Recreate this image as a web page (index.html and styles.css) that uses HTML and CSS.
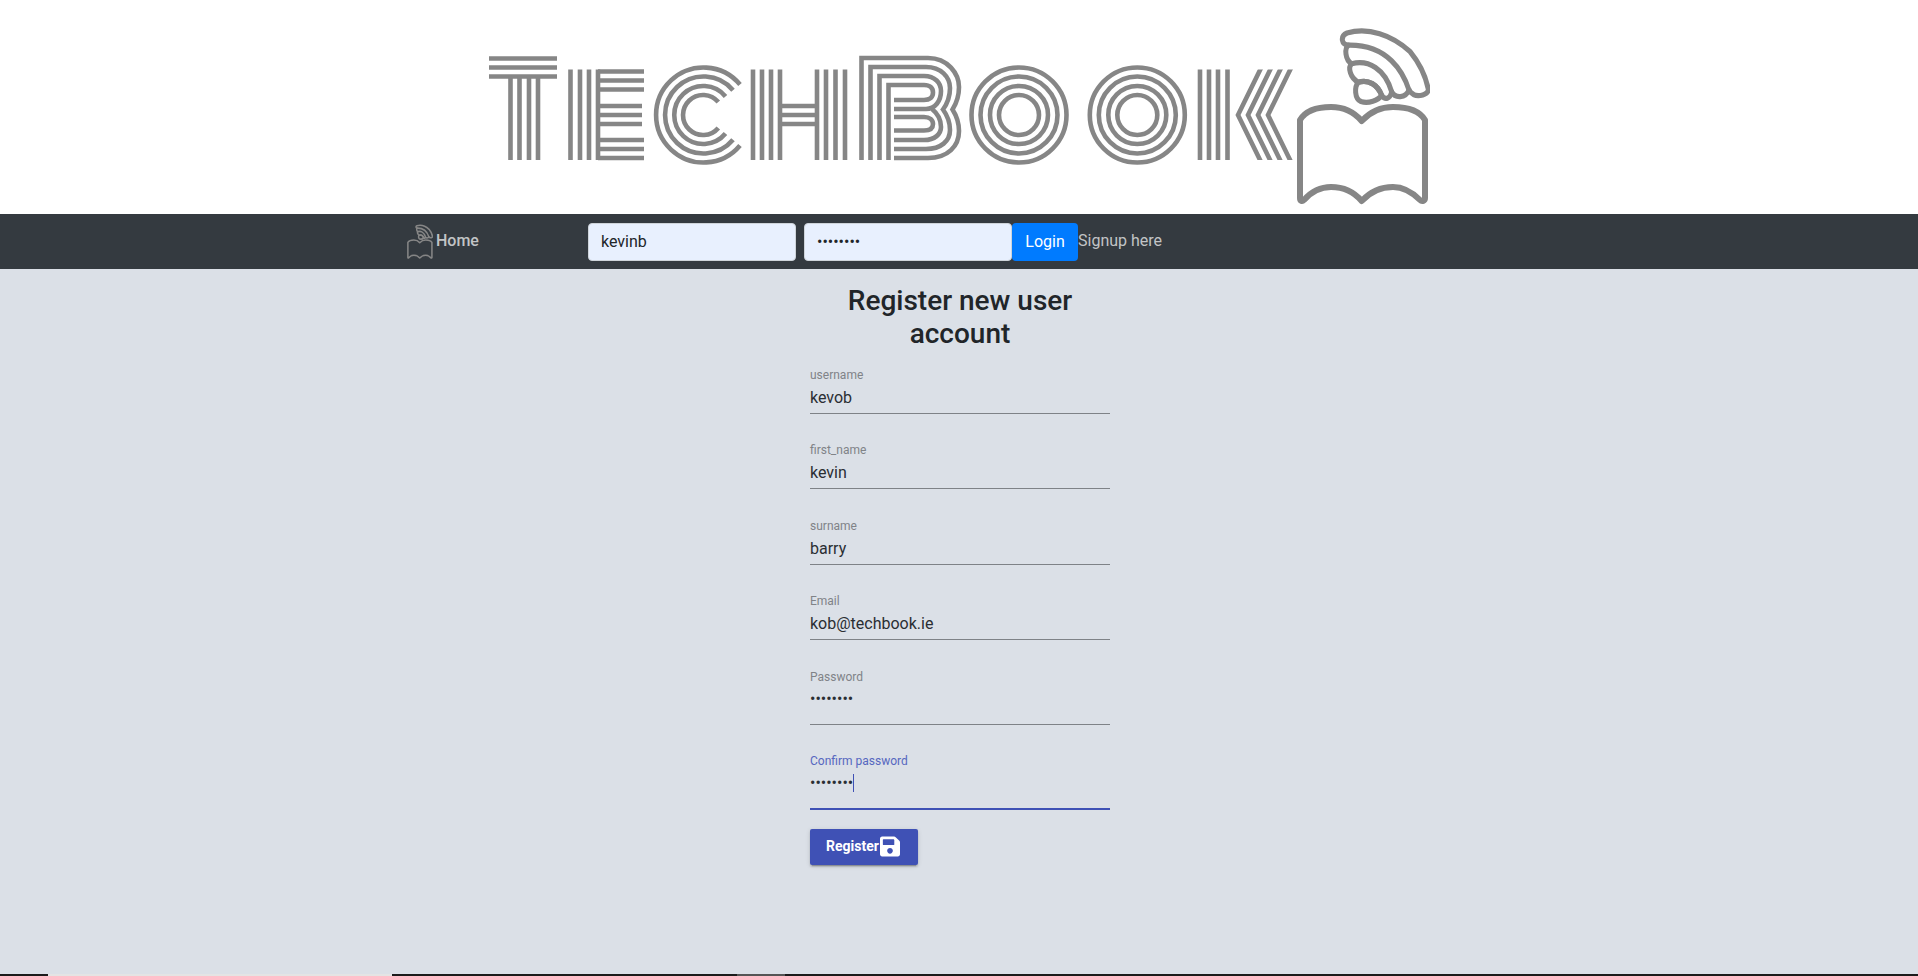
FILE: index.html
```html
<!DOCTYPE html>
<html lang="en">
<head>
<meta charset="utf-8">
<title>TechBook</title>
<link rel="stylesheet" href="styles.css">
</head>
<body>
<svg class="defs" width="0" height="0" aria-hidden="true">
  <symbol id="book-wifi" viewBox="1296 24 134 182">
    <g class="icon-line">
      <path d="M1300 120C1306 110 1318 107 1331 107C1344 107 1354 112 1361.700 121C1370 112 1380 107 1393 107C1406 107 1419 110 1425 120V198C1425 201 1422 202 1420 200C1412 192 1404 187 1393 187C1380 187 1370 192 1361.700 201C1354 192 1344 187 1331 187C1319 187 1311 192 1304 200C1302 202 1300 201 1300 198Z"/>
      <g class="icon-waves" transform="translate(1335 20) scale(.3333 .35)">
        <path d="M40 72C20 72 14 46 36 37C100 20 170 42 225 90C255 125 272 160 280 198C280 214 250 220 236 213C228 208 224 204 222 200C205 150 160 70 40 72Z"/>
        <path d="M40 72C28 80 30 115 50 125C100 112 150 140 170 205C180 224 212 224 222 200"/>
        <path d="M50 125C38 135 45 165 70 178C100 168 128 186 140 215C150 230 165 226 170 205"/>
        <path d="M70 178C58 190 58 225 78 233C100 240 130 230 140 215C128 186 100 168 70 178Z"/>
      </g>
    </g>
  </symbol>
</svg>

<header class="banner">
  <svg class="logo" viewBox="479 0 960 214" width="960" height="214" role="img" aria-label="TechBook">
    <defs>
      <clipPath id="k-clip"><rect x="1230" y="69.500" width="70" height="90.500"/></clipPath>
    </defs>
    <g class="logo-line">
      <path d="M489 58.500H557M489 67.500H557M489 76.500H557"/>
      <path d="M510.500 76V160M519.500 76V160M529 76V160M538 76V160"/>

      <path d="M570.500 69.500V160M580 69.500V160M589 69.500V160M598 69.500V160"/>
      <path d="M598 71.500H644M598 80.500H644M598 89.500H644M598 106H642M598 115H642M598 124H642M598 140H644M598 149H644M598 158H644"/>

      <path d="M740 84.500A47.500 47.500 0 1 0 740 145.500"/>
      <path d="M733 90.200A38.500 38.500 0 1 0 733 139.800"/>
      <path d="M725.500 96.400A29 29 0 1 0 725.500 133.600"/>
      <path d="M718.300 102.100A20 20 0 1 0 718.300 127.900"/>

      <path d="M753 69.500V160M762 69.500V160M771 69.500V160M780 69.500V160M817 69.500V160M826 69.500V160M835.500 69.500V160M845 69.500V160"/>
      <path d="M780 106H817M780 115H817M780 124H817"/>

      <path d="M861.500 160V58H928C948 58 959 74 959 87C959 97 956 104 952.500 109.500C956 115 959 122 959 131C959 146 948 158 928 158H894"/>
      <path d="M870.500 160V67H926C941 67 950 77 950 88C950 96 947 104 943 109.500C947 115 950 122 950 130C950 141 941 149 926 149H894"/>
      <path d="M879.500 160V76H924C935 76 941 83 941 91C941 101 935 109 926 109H894"/>
      <path d="M894 140H924C935 140 941 134 941 127C941 119 937 113 932 109"/>
      <path d="M888.500 160V85H924C930 85 933 88 933 92.500C933 97 930 100 924 100H894"/>
      <path d="M894 117H924C930 117 933 120 933 124C933 128 930 130.500 924 130.500H894"/>

      <circle cx="1019" cy="115" r="47.500"/><circle cx="1019" cy="115" r="38.500"/><circle cx="1019" cy="115" r="29"/><circle cx="1019" cy="115" r="20"/>
      <circle cx="1137.300" cy="115" r="47.500"/><circle cx="1137.300" cy="115" r="38.500"/><circle cx="1137.300" cy="115" r="29"/><circle cx="1137.300" cy="115" r="20"/>

      <path d="M1200 69.500V160M1209 69.500V160M1218 69.500V160M1227.500 69.500V160"/>
      <g clip-path="url(#k-clip)">
        <path d="M1262.500 65L1238 115L1262.500 165M1272.500 65L1248 115L1272.500 165M1282.500 65L1258 115L1282.500 165M1292.500 65L1268 115L1292.500 165"/>
      </g>
    </g>
    <use class="logo-mark" href="#book-wifi" x="1296" y="24" width="134" height="182"/>
  </svg>
</header>

<nav class="navbar">
  <a class="brand" href="#">
    <svg class="brand-icon" width="26" height="35"><use href="#book-wifi"/></svg>
    <span>Home</span>
  </a>
  <form class="login">
    <input class="login-input" type="text" value="kevinb" aria-label="username">
    <input class="login-input" type="password" value="kevinbar" aria-label="password">
    <button class="login-btn" type="button">Login</button>
  </form>
  <a class="signup" href="#">Signup here</a>
</nav>

<main class="content">
  <form class="register">
    <h2 class="register-title">Register new user account</h2>
    <label class="field"><span class="field-label">username</span><input class="field-input" type="text" value="kevob"></label>
    <label class="field"><span class="field-label">first_name</span><input class="field-input" type="text" value="kevin"></label>
    <label class="field"><span class="field-label">surname</span><input class="field-input" type="text" value="barry"></label>
    <label class="field"><span class="field-label">Email</span><input class="field-input" type="text" value="kob@techbook.ie"></label>
    <label class="field field-tall"><span class="field-label">Password</span><input class="field-input" type="password" value="kevinbar"></label>
    <label class="field field-tall field-focused"><span class="field-label">Confirm password</span><input class="field-input" type="password" value="kevinbar"><span class="caret"></span></label>
    <button class="register-btn" type="button">
      <span class="register-text">Register</span>
      <svg class="save-icon" viewBox="0 0 448 512" width="20" height="23" aria-hidden="true"><path d="M433.941 129.941l-83.882-83.882A48 48 0 0 0 316.118 32H48C21.490 32 0 53.490 0 80v352c0 26.510 21.490 48 48 48h352c26.510 0 48-21.490 48-48V163.882a48 48 0 0 0-14.059-33.941zM224 416c-35.346 0-64-28.654-64-64 0-35.346 28.654-64 64-64s64 28.654 64 64c0 35.346-28.654 64-64 64zm96-304.520V212c0 6.627-5.373 12-12 12H76c-6.627 0-12-5.373-12-12V108c0-6.627 5.373-12 12-12h228.520c3.183 0 6.235 1.264 8.485 3.515l3.480 3.480A11.996 11.996 0 0 1 320 111.480z"/></svg>
    </button>
  </form>
</main>

<div class="scrollstrip">
  <span class="seg seg-a"></span>
  <span class="seg seg-b"></span>
  <span class="seg seg-c"></span>
  <span class="seg seg-d"></span>
  <span class="seg seg-e"></span>
</div>
</body>
</html>
```

FILE: styles.css
```css
* { box-sizing: border-box; }

html, body {
  margin: 0;
  height: 100%;
}

body {
  display: flex;
  flex-direction: column;
  height: 976px;
  overflow: hidden;
  background: #dbe0e7;
  font-family: Roboto, "Liberation Sans", sans-serif;
  color: #212529;
}

.defs { position: absolute; }

.icon-line {
  fill: none;
  stroke: #868686;
  stroke-width: var(--book-stroke, 6);
  stroke-linejoin: round;
  stroke-linecap: round;
}
.icon-waves { stroke-width: var(--wave-stroke, 15); }

.logo-line {
  fill: none;
  stroke: #868686;
  stroke-width: 4.6;
}

.banner {
  flex: none;
  height: 214px;
  background: #fff;
  display: flex;
  justify-content: center;
}
.logo { display: block; }

.navbar {
  flex: none;
  height: 55px;
  background: #343a40;
  display: flex;
  align-items: center;
  padding-left: 407px;
}

.brand {
  display: flex;
  align-items: center;
  width: 181px;
  gap: 3px;
  color: #c2c4c6;
  text-decoration: none;
  font-size: 16px;
  font-weight: 500;
}
.brand-icon {
  display: block;
  margin-top: -1px;
  --book-stroke: 8;
  --wave-stroke: 24;
}
.brand span { margin-top: -2px; }

.login {
  display: flex;
  align-items: center;
}
.login-input {
  width: 208px;
  height: 38px;
  margin-right: 8px;
  padding: 0 12px;
  background: #e8f0fe;
  border: 1px solid #ced4da;
  border-radius: 4px;
  font: 400 16px Roboto, sans-serif;
  color: #212529;
  outline: none;
}
.login-input + .login-input { margin-right: 0; }

.login-btn {
  width: 66px;
  height: 38px;
  padding: 0;
  background: #007bff;
  color: #fff;
  border: 0;
  border-radius: 4px;
  font: 400 16px Roboto, sans-serif;
}

.signup {
  color: #c2c4c6;
  font-size: 16px;
  text-decoration: none;
  margin-top: -2px;
}

.content {
  flex: 1;
  min-height: 0;
  display: flex;
  justify-content: center;
  padding: 15px 0 0 2px;
}

.register {
  width: 300px;
  display: flex;
  flex-direction: column;
  align-items: stretch;
}

.register-title {
  margin: 0 0 18px;
  font-size: 28px;
  font-weight: 500;
  line-height: 33px;
  text-align: center;
  color: #212529;
}

.field {
  position: relative;
  display: flex;
  flex-direction: column;
  flex: none;
  height: 46px;
  margin-bottom: 29.4px;
  border-bottom: 1px solid #7e8287;
}
.field-tall { height: 55px; }

.field-focused {
  height: 56px;
  margin-bottom: 19px;
  border-bottom: 2px solid #3f51b5;
}
.field-focused .field-label { color: #5667c0; }

.field-label {
  font-size: 12px;
  line-height: 14px;
  color: #808387;
}

.field-input {
  width: 100%;
  height: 20px;
  margin-top: 6px;
  padding: 0;
  background: transparent;
  border: 0;
  outline: none;
  font: 400 16px/20px Roboto, sans-serif;
  color: #2a2e33;
}
.field-tall .field-input { margin-top: 5px; }

.caret {
  position: absolute;
  left: 43px;
  top: 20px;
  width: 1px;
  height: 18px;
  background: #3f51b5;
}

.register-btn {
  align-self: flex-start;
  display: flex;
  align-items: center;
  gap: 1px;
  height: 36px;
  width: 108px;
  padding: 0 0 0 16px;
  background: #3f51b5;
  color: #fff;
  border: 0;
  border-radius: 2px;
  font: 700 14px Roboto, sans-serif;
  box-shadow: 0 3px 1px -2px rgba(0,0,0,.2), 0 2px 2px 0 rgba(0,0,0,.14), 0 1px 5px 0 rgba(0,0,0,.12);
}
.register-text { margin-top: -1px; }
.save-icon { fill: #fff; display: block; }

.scrollstrip {
  flex: none;
  height: 2px;
  display: flex;
  background: #1b1b1b;
}
.seg { display: block; height: 2px; }
.seg-a { width: 48px; }
.seg-b { width: 344px; background: #e4e4e4; }
.seg-c { width: 345px; }
.seg-d { width: 48px; background: #555; }
.seg-e { flex: 1; }
```
